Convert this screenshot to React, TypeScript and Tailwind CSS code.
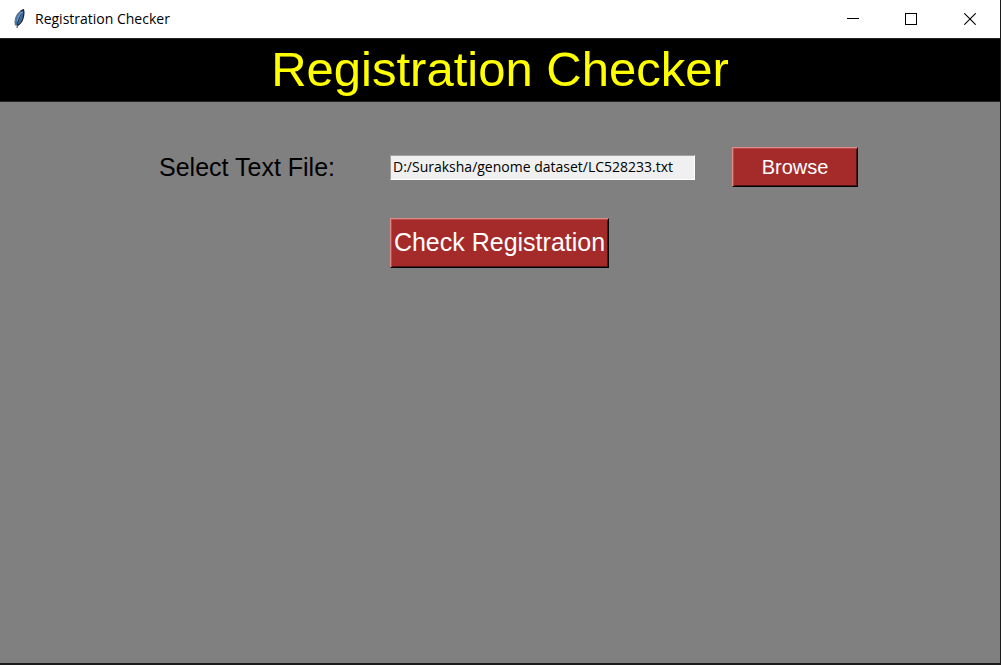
import { useState } from "react";

function FeatherIcon() {
  return (
    <svg width="16" height="20" viewBox="0 0 16 20" aria-hidden="true">
      <path d="M12.4 0.8C9.6 1.4 6.6 4 5 8C3.9 11 3.8 13.8 4.4 16.4L6.8 16.4C9.4 14.6 11.6 11.8 12.3 8C12.9 5.4 13.2 2.6 12.4 0.8Z" fill="#3a6ea5" />
      <path d="M12 2C9.2 3.4 7 6.6 6 10L5.6 13.4C8.6 10 10.8 6 12 2Z" fill="#6fa4dc" />
      <path d="M9.6 2.2C7.6 3.4 6 5.4 5 8C3.9 11 3.8 13.8 4.4 16.2" fill="none" stroke="#6b7078" strokeWidth="1" />
      <path d="M9.6 2.2L12.4 0.8C13.2 2.6 12.9 5.4 12.3 8C11.6 11.8 9.4 14.8 6.8 16.4" fill="none" stroke="#1b222c" strokeWidth="1.3" />
      <path d="M10.6 4.6C8.2 8.4 6.4 13 6 19" fill="none" stroke="#30343a" strokeWidth="1" />
    </svg>
  );
}

const captionButton = "flex w-[58px] items-center justify-center hover:bg-gray-200";
const raised =
  "border border-t-[#e08a8a] border-l-[#e08a8a] border-r-black border-b-black bg-[#a52a2a] text-white shadow-[inset_1px_1px_0_#b84a4a,inset_-1px_-1px_0_#521515]";

export default function App() {
  const [path, setPath] = useState("D:/Suraksha/genome dataset/LC528233.txt");

  return (
    <div className="flex min-h-screen flex-col border-r border-b-2 border-[#1c1c1c] bg-[#808080] font-['Liberation_Sans',Arial,sans-serif] text-black">
      <header className="flex h-[38px] bg-white">
        <div className="flex flex-1 items-center gap-2 pl-[11px] font-['Open_Sans','Noto_Sans',sans-serif] text-sm">
          <FeatherIcon />
          <span>Registration Checker</span>
        </div>
        <button type="button" aria-label="Minimize" className={captionButton}>
          <svg width="12" height="12" viewBox="0 0 12 12" shapeRendering="crispEdges">
            <path d="M0 5.5H12" stroke="#000" />
          </svg>
        </button>
        <button type="button" aria-label="Maximize" className={captionButton}>
          <svg width="12" height="12" viewBox="0 0 12 12" shapeRendering="crispEdges">
            <rect x="0.5" y="0.5" width="11" height="11" fill="none" stroke="#000" />
          </svg>
        </button>
        <button type="button" aria-label="Close" className="flex w-[60px] items-center justify-center hover:bg-gray-200">
          <svg width="12" height="12" viewBox="0 0 12 12">
            <path d="M0.3 0.3L11.7 11.7M11.7 0.3L0.3 11.7" stroke="#000" strokeWidth="1.1" />
          </svg>
        </button>
      </header>

      <h1 className="flex h-16 items-center justify-center border-y border-[#262626] bg-black pb-0.5 text-[49px] leading-none text-[#ffff00]">
        Registration Checker
      </h1>

      <main className="grid grid-cols-[231fr_305fr_163fr] items-center gap-y-[31px] pt-[45px] pr-[142px] pl-[159px]">
        <label htmlFor="file" className="text-[25px] leading-10 whitespace-nowrap">
          Select Text File:
        </label>
        <input
          id="file"
          type="text"
          value={path}
          onChange={(e) => setPath(e.target.value)}
          className="h-[25px] w-full min-w-0 border border-t-[#a0a0a0] border-r-white border-b-white border-l-[#a0a0a0] bg-[#f0f0f0] px-0.5 pb-0.5 font-['Open_Sans','Noto_Sans',sans-serif] text-sm outline-none"
        />
        <button type="button" className={`h-10 w-[126px] justify-self-end text-xl ${raised}`}>
          Browse
        </button>
        <button type="button" className={`col-start-2 h-[50px] w-[219px] text-[25px] whitespace-nowrap ${raised}`}>
          Check Registration
        </button>
      </main>
    </div>
  );
}
